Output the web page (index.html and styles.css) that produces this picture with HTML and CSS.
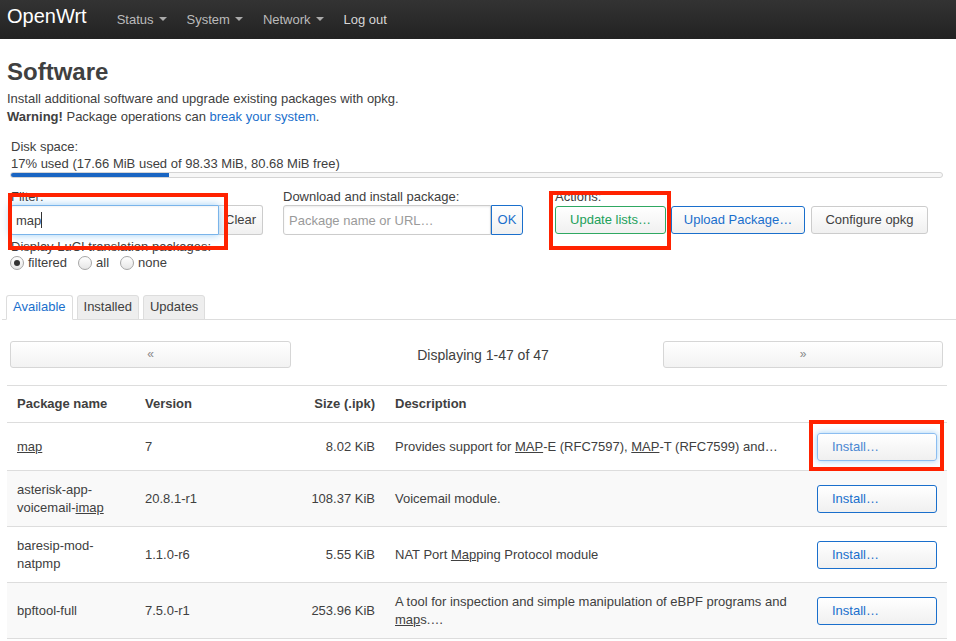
FILE: index.html
```html
<!DOCTYPE html>
<html lang="en">
<head>
<meta charset="utf-8">
<title>Software - OpenWrt</title>
<link rel="stylesheet" href="styles.css">
</head>
<body>
<header class="navbar">
  <a class="brand" href="#">OpenWrt</a>
  <ul class="nav">
    <li><a href="#">Status<span class="caret"></span></a></li>
    <li><a href="#">System<span class="caret"></span></a></li>
    <li><a href="#">Network<span class="caret"></span></a></li>
    <li><a href="#" class="logout">Log out</a></li>
  </ul>
</header>
<main class="main">
  <h2 class="title">Software</h2>
  <p class="desc">Install additional software and upgrade existing packages with opkg.<br><strong>Warning!</strong> Package operations can <a href="#">break your system</a>.</p>
  <div class="controls">
    <div class="disk">
      <div class="dl">Disk space:</div>
      <div class="dl">17% used (17.66 MiB used of 98.33 MiB, 80.68 MiB free)</div>
      <div class="bar"><div class="fill" style="width:17%"></div></div>
    </div>
    <div class="ctl-row">
      <div class="ctl ctl-filter">
        <div class="lbl">Filter:</div>
        <div class="igroup">
          <div class="field focused"><input class="input" type="text" value="map"><span class="tcaret"></span></div>
          <button class="btn addon">Clear</button>
        </div>
        <div class="lbl lbl-gap">Display LuCI translation packages:</div>
        <div class="radios">
          <span class="opt"><span class="radio checked"></span>filtered</span>
          <span class="opt"><span class="radio"></span>all</span>
          <span class="opt"><span class="radio"></span>none</span>
        </div>
      </div>
      <div class="ctl ctl-dl">
        <div class="lbl">Download and install package:</div>
        <div class="igroup">
          <div class="field"><input class="input" type="text" placeholder="Package name or URL…"></div>
          <button class="btn addon addon-blue">OK</button>
        </div>
      </div>
      <div class="ctl ctl-actions">
        <div class="lbl">Actions:</div>
        <div class="actions">
          <button class="btn btn-green">Update lists…</button>
          <button class="btn btn-blue">Upload Package…</button>
          <button class="btn btn-conf">Configure opkg</button>
        </div>
      </div>
    </div>
  </div>

  <ul class="tabs">
    <li class="tab active"><a href="#">Available</a></li>
    <li class="tab"><a href="#">Installed</a></li>
    <li class="tab"><a href="#">Updates</a></li>
  </ul>

  <div class="pager">
    <button class="btn pbtn">«</button>
    <div class="pinfo">Displaying 1-47 of 47</div>
    <button class="btn pbtn">»</button>
  </div>

  <table class="pkgs">
    <colgroup>
      <col class="c-name"><col class="c-ver"><col class="c-size"><col class="c-desc"><col class="c-act">
    </colgroup>
    <thead>
      <tr class="head">
        <th>Package name</th><th>Version</th><th class="num">Size (.ipk)</th><th>Description</th><th></th>
      </tr>
    </thead>
    <tbody>
      <tr>
        <td><u>map</u></td><td>7</td><td class="num">8.02 KiB</td>
        <td>Provides support for <u>MAP</u>-E (RFC7597), <u>MAP</u>-T (RFC7599) and…</td>
        <td><button class="btn btn-install focus">Install…</button></td>
      </tr>
      <tr class="alt">
        <td>asterisk-app-voicemail-<u>imap</u></td><td>20.8.1-r1</td><td class="num">108.37 KiB</td>
        <td>Voicemail module.</td>
        <td><button class="btn btn-install">Install…</button></td>
      </tr>
      <tr>
        <td>baresip-mod-natpmp</td><td>1.1.0-r6</td><td class="num">5.55 KiB</td>
        <td>NAT Port <u>Map</u>ping Protocol module</td>
        <td><button class="btn btn-install">Install…</button></td>
      </tr>
      <tr class="alt">
        <td>bpftool-full</td><td>7.5.0-r1</td><td class="num">253.96 KiB</td>
        <td>A tool for inspection and simple manipulation of eBPF programs and <u>map</u>s.…</td>
        <td><button class="btn btn-install">Install…</button></td>
      </tr>
    </tbody>
  </table>
</main>

<div class="annot annot-1"></div>
<div class="annot annot-2"></div>
<div class="annot annot-3"></div>
</body>
</html>
```

FILE: styles.css
```css
* { box-sizing: border-box; }

body {
  margin: 0;
  font-family: "Liberation Sans", Arial, Helvetica, sans-serif;
  font-size: 13px;
  line-height: 18px;
  color: #404040;
  background: #fff;
}

a { color: #1a6fcc; text-decoration: none; }

/* ---------- navbar ---------- */
.navbar {
  height: 39px;
  display: flex;
  align-items: flex-start;
  background: linear-gradient(#333333, #222222);
}
.brand {
  display: block;
  color: #ffffff;
  font-size: 20px;
  line-height: 33px;
  padding: 0 20px 0 7px;
}
.nav {
  list-style: none;
  margin: 0;
  padding: 0;
  display: flex;
}
.nav a {
  display: block;
  color: #bbbbbb;
  font-size: 13px;
  line-height: 39px;
  padding: 0 10px;
}
.nav a.logout { color: #d6d6d6; }
.caret {
  display: inline-block;
  width: 0;
  height: 0;
  margin-left: 5px;
  vertical-align: 3px;
  border-top: 4px solid #aaaaaa;
  border-left: 4px solid transparent;
  border-right: 4px solid transparent;
}

/* ---------- main ---------- */
.main {
  padding: 0 9px 0 7px;
}
.title {
  margin: 19px 0 4px;
  font-size: 24px;
  line-height: 28px;
  font-weight: bold;
  color: #404040;
}
.desc {
  margin: 0;
}
.desc strong { font-weight: bold; }

.controls {
  padding: 0 4px 0 3px;
}
.disk {
  margin-top: 12px;
}
.dl {
  line-height: 17px;
  padding-left: 1px;
}
.bar {
  height: 6px;
  border: 1px solid #d4d4d4;
  border-radius: 3px;
  background: #f7f7f7;
  overflow: hidden;
}
.fill {
  height: 100%;
  background: #1a65c2;
}

.ctl-row {
  display: flex;
  margin-top: 11px;
}
.ctl-filter { width: 273px; }
.ctl-dl { width: 272px; }
.ctl-actions { flex: 1; }

.lbl {
  line-height: 16px;
}
.ctl-filter .lbl { padding-left: 1px; }
.lbl-gap { margin-top: 4px; }

.igroup {
  display: flex;
  height: 30px;
}
.field {
  position: relative;
}
.ctl-filter .field { width: 209px; }
.ctl-dl .field { width: 208px; }
.input {
  display: block;
  width: 100%;
  height: 30px;
  margin: 0;
  padding: 5px 5px;
  font: inherit;
  line-height: 18px;
  color: #404040;
  border: 1px solid #cccccc;
  border-radius: 3px 0 0 3px;
  background: #fff;
  box-shadow: inset 0 1px 2px rgba(0, 0, 0, 0.08);
  outline: none;
}
.input::placeholder { color: #9a9a9a; }
.field.focused .input {
  border-color: #7ab4ea;
  box-shadow: inset 0 1px 2px rgba(0, 0, 0, 0.05), 0 0 8px rgba(82, 168, 236, 0.55);
}
.tcaret {
  position: absolute;
  left: 31px;
  top: 7px;
  width: 1px;
  height: 16px;
  background: #333;
}

/* ---------- buttons ---------- */
.btn {
  font: inherit;
  line-height: 18px;
  padding: 4px 14px;
  color: #404040;
  border: 1px solid #cccccc;
  border-radius: 3px;
  background: linear-gradient(#ffffff, #f0f0f0);
  white-space: nowrap;
  cursor: pointer;
}
.addon {
  height: 30px;
  padding: 5px 6px;
  border-left: 0;
  border-radius: 0 3px 3px 0;
}
.ctl-filter .addon { width: 44px; }
.addon-blue {
  width: 32px;
  padding: 5px 4px;
  color: #1a6fcc;
  border: 1px solid #1a6fcc;
}
.actions {
  display: flex;
  align-items: center;
  height: 30px;
}
.actions .btn {
  height: 28px;
  padding: 4px 0;
  margin-right: 5px;
  text-align: center;
}
.btn-green { width: 111px; color: #22a05a; border-color: #2fa862; }
.btn-blue { width: 134px; color: #1a6fcc; border-color: #1a6fcc; }
.actions .btn-blue { margin-right: 6px; }
.btn-conf { width: 117px; }

.radios {
  display: flex;
  line-height: 16px;
}
.opt {
  display: flex;
  align-items: center;
  margin-right: 11px;
}
.radio {
  width: 14px;
  height: 14px;
  margin-right: 4px;
  border: 1px solid #a6a6a6;
  border-radius: 50%;
  background: linear-gradient(#ffffff, #e6e6e6);
  display: flex;
  align-items: center;
  justify-content: center;
}
.radio.checked::after {
  content: "";
  width: 6px;
  height: 6px;
  border-radius: 50%;
  background: #333;
}

/* ---------- tabs ---------- */
.tabs {
  list-style: none;
  margin: 24px -9px 0 -5px;
  padding: 0 0 0 4px;
  display: flex;
  border-bottom: 1px solid #dddddd;
}
.tab {
  margin: 0 4px -1px 0;
  border: 1px solid #dddddd;
  border-radius: 3px 3px 0 0;
  background: #eeeeee;
}
.tab a {
  display: block;
  padding: 2px 6px 3px;
  color: #404040;
}
.tab.active {
  background: #ffffff;
  border-bottom-color: #ffffff;
}
.tab.active a { color: #1a6fcc; }

/* ---------- pager ---------- */
.pager {
  display: grid;
  grid-template-columns: 281px 1fr 280px;
  align-items: center;
  margin-top: 21px;
  padding: 0 4px 0 3px;
}
.pbtn {
  height: 27px;
  padding: 3px 0 4px;
  color: #888888;
  font-size: 12px;
  background: linear-gradient(#ffffff, #f2f2f2);
  border-color: #d6d6d6;
}
.pinfo {
  text-align: center;
  font-size: 14px;
  padding-left: 12px;
}

/* ---------- table ---------- */
.pkgs {
  width: 940px;
  margin-top: 17px;
  border-collapse: collapse;
  table-layout: fixed;
}
.c-name { width: 128px; }
.c-ver { width: 140px; }
.c-size { width: 110px; }
.c-desc { width: 422px; }
.c-act { width: 140px; }
.pkgs tr {
  border-top: 1px solid #dddddd;
}
.pkgs tbody tr:last-child { border-bottom: 1px solid #dddddd; }
.pkgs th {
  text-align: left;
  font-weight: bold;
  padding: 9px 10px 9px;
}
.pkgs td {
  padding: 10px 10px 9px;
  vertical-align: middle;
  word-wrap: break-word;
}
.pkgs .num { text-align: right; }
.pkgs tr.alt { background: #f9f9f9; }
.pkgs u { text-decoration: underline; }

.btn-install {
  display: block;
  width: 120px;
  height: 28px;
  text-align: left;
  padding: 4px 14px;
  color: #1a6fcc;
  border-color: #1a6fcc;
}
.btn-install.focus {
  color: #4a86d2;
  border-color: #8cbdf0;
  box-shadow: 0 0 6px rgba(82, 168, 236, 0.55);
}

/* ---------- annotation boxes (overlay) ---------- */
.annot {
  position: absolute;
  border: 4px solid #ff2200;
}
.annot-1 { left: 8px; top: 193px; width: 220px; height: 57px; }
.annot-2 { left: 549px; top: 191px; width: 122px; height: 59px; }
.annot-3 { left: 809px; top: 420px; width: 135px; height: 51px; }
```
